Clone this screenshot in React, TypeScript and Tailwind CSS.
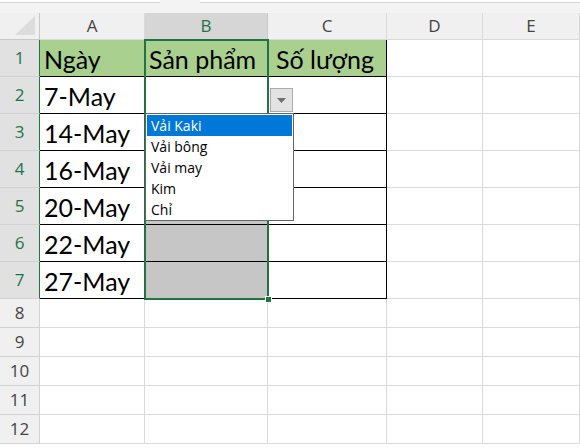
import React from "react";

const COLS = ["A", "B", "C", "D", "E"];
const data: Record<number, string[]> = {
  1: ["Ngày", "Sản phẩm", "Số lượng"],
  2: ["7-May", "", ""],
  3: ["14-May", "", ""],
  4: ["16-May", "", ""],
  5: ["20-May", "", ""],
  6: ["22-May", "", ""],
  7: ["27-May", "", ""],
};
const items = ["Vải Kaki", "Vải bông", "Vải may", "Kim", "Chỉ"];

export default function App() {
  const rows = Array.from({ length: 12 }, (_, i) => i + 1);
  return (
    <div
      className="relative w-[580px] h-[448px] overflow-hidden bg-white"
      style={{ fontFamily: '"Open Sans", "Noto Sans", sans-serif' }}
    >
      {/* formula bar remnant */}
      <div className="flex h-[13px] bg-[#f3f3f3]">
        <div className="w-[160px] h-[3px] bg-white border-b border-[#d6d6d6]" />
        <div className="w-[40px]" />
        <div className="flex-1 h-[3px] bg-white border-b border-[#d6d6d6]" />
      </div>
      <div className="grid grid-cols-[40px_105px_123px_119px_96px_97px] grid-rows-[27px_repeat(7,37px)_repeat(5,29px)]">
        {/* header row */}
        <div className="bg-[#f0f0f0] border-r border-b border-[#c8c8c8] flex items-end justify-end pr-[4px] pb-[4px]">
          <svg width="20" height="19" viewBox="0 0 20 19">
            <polygon points="20,0 20,19 0,19" fill="#dcdcdc" />
          </svg>
        </div>
        {COLS.map((c) => (
          <div
            key={c}
            className={
              c === "B"
                ? "bg-[#d6d6d6] border-r border-b border-[#c8c8c8] flex items-center justify-center text-[17px] text-[#217346]"
                : "bg-[#f0f0f0] border-r border-b border-[#dadada] flex items-center justify-center text-[17px] text-[#444444]"
            }
          >
            {c}
          </div>
        ))}
        {rows.map((r) => {
          const sel = r <= 7;
          const row = data[r];
          return (
            <React.Fragment key={r}>
              <div
                className={
                  sel
                    ? "bg-[#e1e1e1] border-r border-b border-r-[#217346] border-b-[#d2d2d2] flex items-center justify-center text-[17px] text-[#217346]"
                    : "bg-[#f0f0f0] border-r border-b border-[#d2d2d2] flex items-center justify-center text-[17px] text-[#444444]"
                }
              >
                {r}
              </div>
              {COLS.map((c, ci) => {
                const inTable = sel && ci < 3;
                const green = r === 1 && ci < 3;
                const gray = c === "B" && r >= 3 && r <= 7;
                const rightBlack = sel && ci <= 2;
                const cls = [
                  "border-r border-b flex items-center pt-[3px] text-[25px] leading-none text-black whitespace-nowrap overflow-hidden",
                  r === 1 && ci === 2 ? "pl-[8px]" : "pl-[4px]",
                  rightBlack ? "border-r-black" : "border-r-[#dadada]",
                  inTable ? "border-b-black" : "border-b-[#dadada]",
                  green ? "bg-[#a9d08e]" : gray ? "bg-[#c6c6c6]" : "bg-white",
                ].join(" ");
                return (
                  <div key={c} className={cls} style={{ fontFamily: '"Lato", "Open Sans", sans-serif' }}>
                    {row && ci < 3 ? row[ci] : ""}
                  </div>
                );
              })}
            </React.Fragment>
          );
        })}
      </div>

      {/* selection border B1:B7 */}
      <div className="absolute left-[144px] top-[39px] w-[125px] h-[261px] border-2 border-[#217346] pointer-events-none" />
      {/* fill handle */}
      <div className="absolute left-[265px] top-[296px] w-[7px] h-[7px] bg-[#217346] border border-white" />

      {/* dropdown button */}
      <div className="absolute left-[270px] top-[88px] w-[23px] h-[24px] bg-[#e3e3e3] border border-[#acacac] flex items-center justify-center">
        <svg width="9" height="5" viewBox="0 0 9 5">
          <polygon points="0,0 9,0 4.5,5" fill="#707070" />
        </svg>
      </div>

      {/* dropdown list */}
      <div className="absolute left-[145px] top-[113px] w-[149px] h-[108px] bg-white border border-[#646464] p-[1px] flex flex-col">
        {items.map((it, i) => (
          <div
            key={it}
            className={
              i === 0
                ? "h-[21px] flex items-center pl-[4px] text-[14px] bg-[#0078d7] text-white"
                : "h-[21px] flex items-center pl-[4px] text-[14px] text-black"
            }
            style={{ fontFamily: '"Open Sans", "Noto Sans", sans-serif' }}
          >
            {it}
          </div>
        ))}
      </div>
    </div>
  );
}
